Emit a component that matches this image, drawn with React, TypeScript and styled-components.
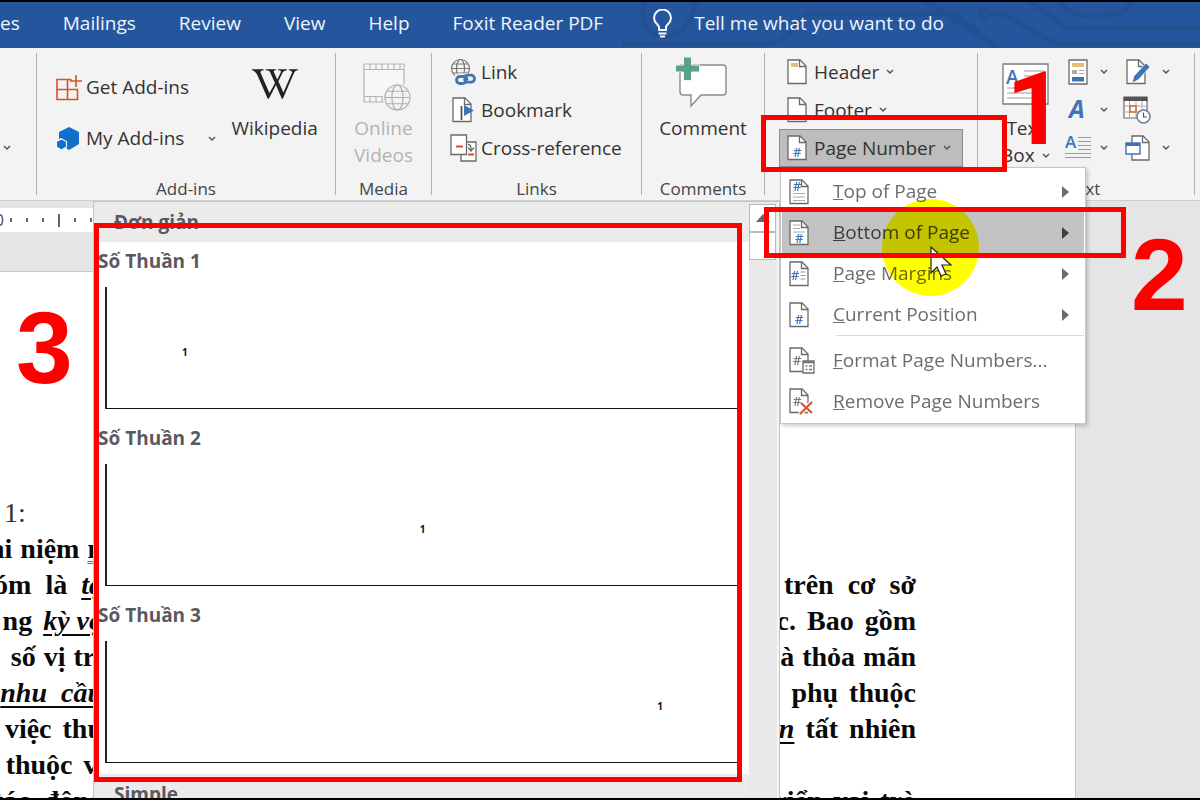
import React from 'react';
import styled, { createGlobalStyle } from 'styled-components';
import { FaWikipediaW } from 'react-icons/fa';

const UI_FONT = `'Open Sans', 'Noto Sans', sans-serif`;
const DOC_FONT = `'Liberation Serif', 'Times New Roman', serif`;
const RED = '#ff0000';

const GlobalStyle = createGlobalStyle`
  *, *::before, *::after { box-sizing: border-box; }
  body { margin: 0; background: #e6e6e6; font-family: ${UI_FONT}; }
  button { font: inherit; color: inherit; }
`;

/* ---------- frame ---------- */

const Screen = styled.div`
  position: relative;
  display: flex;
  flex-direction: column;
  height: 100vh;
  overflow: hidden;
  border-top: 2px solid #000;
  border-bottom: 2px solid #000;
`;

const TabBar = styled.nav`
  position: relative;
  display: flex;
  align-items: center;
  gap: 43px;
  flex: none;
  height: 46px;
  padding-bottom: 4px;
  background: #25569d;
  color: #eef4fb;
  font-size: 19px;
  line-height: 26px;
`;

const Circuit = styled.svg`
  position: absolute;
  top: 0;
  left: 620px;
  width: 580px;
  height: 46px;
`;

const Tab = styled.button`
  position: relative;
  flex: none;
  padding: 0;
  border: 0;
  background: none;
  white-space: nowrap;
`;

const TellMe = styled(Tab)`
  display: flex;
  align-items: center;
  gap: 21px;
  padding-left: 6px;
`;

/* ---------- ribbon ---------- */

const Ribbon = styled.div`
  display: flex;
  flex: none;
  padding: 5px 0;
  background: #f3f3f3;
  border-bottom: 1px solid #cfcfcf;
  color: #333;
  font-size: 19px;
  line-height: 27px;
`;

const Group = styled.section<{ $width: number; $inset?: number }>`
  display: flex;
  flex-direction: column;
  flex: none;
  width: ${(p) => p.$width}px;
  height: 142px;
  padding-left: ${(p) => p.$inset ?? 0}px;
  border-right: 1px solid #b4b4b4;
`;

const GroupBody = styled.div<{ $gap?: number; $center?: boolean }>`
  display: flex;
  gap: ${(p) => p.$gap ?? 0}px;
  justify-content: ${(p) => (p.$center ? 'center' : 'flex-start')};
  height: 114px;
`;

const GroupName = styled.h2<{ $inset?: number }>`
  margin: 14px 0 0;
  padding-right: ${(p) => p.$inset ?? 0}px;
  font-size: 17px;
  font-weight: 400;
  line-height: 16px;
  text-align: center;
  color: #444;
`;

const Stack = styled.div<{ $top?: number }>`
  display: flex;
  flex-direction: column;
  padding-top: ${(p) => p.$top ?? 0}px;
`;

const SmallButton = styled.button<{ $tall?: boolean; $active?: boolean }>`
  display: flex;
  align-items: center;
  gap: ${(p) => (p.$tall ? 4 : 5)}px;
  height: ${(p) => (p.$tall ? 51 : 38)}px;
  padding: 0 11px 0 ${(p) => (p.$tall ? 0 : 7)}px;
  border: 1px solid ${(p) => (p.$active ? '#8c8c8c' : 'transparent')};
  background: ${(p) => (p.$active ? '#bdbdbd' : 'none')};
  white-space: nowrap;
`;

const IconSlot = styled.span<{ $w: number; $center?: boolean }>`
  display: flex;
  flex: none;
  justify-content: ${(p) => (p.$center ? 'center' : 'flex-start')};
  width: ${(p) => p.$w}px;

  svg { flex: none; }
`;

const ArrowSlot = styled.span<{ $gap?: number }>`
  display: flex;
  padding-left: ${(p) => p.$gap ?? 2}px;
`;

const LargeButton = styled.button<{ $disabled?: boolean }>`
  display: flex;
  flex-direction: column;
  align-items: center;
  height: 116px;
  padding: 0;
  border: 0;
  background: none;
  color: ${(p) => (p.$disabled ? '#b3b3b3' : 'inherit')};
`;

const LargeIcon = styled.span`
  display: flex;
  align-items: center;
  justify-content: center;
  height: 62px;
`;

const LabelLine = styled.span`
  display: flex;
  align-items: center;
  gap: 7px;
`;

const IconButton = styled.button`
  display: flex;
  align-items: center;
  gap: 12px;
  height: 38px;
  padding: 0;
  border: 0;
  background: none;
`;

const EdgeButton = styled(IconButton)`
  align-self: flex-end;
  padding-left: 3px;
`;

const PageNumberControl = styled.div`
  position: relative;
  z-index: 3;
`;

/* ---------- page number menu ---------- */

const Menu = styled.ul`
  position: absolute;
  top: 100%;
  left: 1px;
  width: 306px;
  margin: 0;
  padding: 3px 1px 1px;
  list-style: none;
  background: #fff;
  border: 1px solid #c6c6c6;
  box-shadow: 2px 2px 4px rgba(0, 0, 0, 0.2);
`;

const MenuItem = styled.button<{ $active?: boolean }>`
  display: flex;
  align-items: center;
  gap: 18px;
  width: 100%;
  height: 41px;
  padding: 0 14px 0 7px;
  border: 0;
  background: ${(p) => (p.$active ? '#c3c3c3' : 'none')};
  color: ${(p) => (p.$active ? '#3c3c44' : '#6c6c76')};
  text-align: left;
  white-space: nowrap;
`;

const MenuText = styled.span`
  flex: 1;
`;

const Separator = styled.li`
  height: 1px;
  margin: 0 0 4px 54px;
  background: #dadada;
`;

const Highlight = styled.span`
  position: absolute;
  top: 31px;
  left: 101px;
  width: 97px;
  height: 97px;
  border-radius: 50%;
  background: #ffff00;
  mix-blend-mode: multiply;
  pointer-events: none;
`;

const Pointer = styled.svg`
  position: absolute;
  top: 78px;
  left: 149px;
`;

/* ---------- workspace ---------- */

const Workspace = styled.main`
  position: relative;
  display: flex;
  flex-direction: column;
  flex: 1;
  min-height: 0;
  padding-top: 7px;
  background: #e5e5e5;
`;

const Ruler = styled.div`
  display: flex;
  align-items: center;
  gap: 14px;
  width: 1076px;
  max-width: 100%;
  height: 24px;
  flex: none;
  overflow: hidden;
  background: #fff;
  color: #444;
  font-size: 16px;
`;

const RulerNumber = styled.span`
  width: 4px;
  margin-right: -8px;
  direction: rtl;
`;

const Tick = styled.i<{ $long?: boolean }>`
  flex: none;
  width: 2px;
  height: ${(p) => (p.$long ? 13 : 4)}px;
  background: #666;
`;

const Paper = styled.article`
  flex: none;
  width: 1076px;
  max-width: 100%;
  margin-top: 39px;
  padding: 223px 159px 0 0;
  background: #fff;
  border: 1px solid #c6c6c6;
  border-left: 0;
  font-family: ${DOC_FONT};
  font-size: 28px;
  font-weight: 700;
  line-height: 36px;
  color: #0a0a0a;
`;

const Line = styled.p`
  display: flex;
  justify-content: space-between;
  height: 36px;
  margin: 0;
  white-space: nowrap;
`;

const FirstLine = styled(Line)`
  padding-left: 4px;
  font-weight: 400;
  color: #333;
`;

const LineStart = styled.span<{ $gap: number }>`
  display: flex;
  justify-content: flex-end;
  gap: ${(p) => p.$gap}px;
  width: 103px;
`;

const LineEnd = styled.span<{ $gap: number }>`
  display: flex;
  gap: ${(p) => p.$gap}px;
`;

const Term = styled.em`
  text-decoration: underline;
  text-decoration-thickness: 2px;
  text-underline-offset: 4px;
`;

const Flagged = styled.span`
  text-decoration: underline double #3f6fc0 1px;
  text-underline-offset: 3px;
`;

/* ---------- gallery ---------- */

const Gallery = styled.div`
  position: absolute;
  z-index: 1;
  top: 0;
  bottom: 0;
  left: 93px;
  display: flex;
  width: 687px;
  overflow: hidden;
  background: #fff;
  border: 1px solid #c6c6c6;
  border-bottom: 0;
  color: #5a5a5e;
  font-size: 19px;
  font-weight: 700;
  line-height: 26px;
`;

const GalleryList = styled.div`
  flex: 1;
`;

const GalleryHeading = styled.h3`
  height: 40px;
  margin: 0;
  padding: 7px 0 0 20px;
  background: #ebebeb;
  font-size: inherit;
`;

const Preset = styled.button`
  display: flex;
  flex-direction: column;
  width: 100%;
  height: 177px;
  padding: 6px 11px 0 4px;
  border: 0;
  background: none;
  text-align: left;
`;

const PresetPage = styled.span<{ $align: string }>`
  align-self: stretch;
  height: 122px;
  margin: 13px 0 0 7px;
  padding: 57px 75px 0;
  border-left: 2px solid #222;
  border-bottom: 1px solid #111;
  color: #111;
  font-size: 10px;
  line-height: 16px;
  text-align: ${(p) => p.$align};
`;

const PresetGroup = styled.div`
  height: 532px;
`;

const GalleryScroll = styled.div`
  width: 30px;
  padding-top: 2px;
  background: #e9e9e9;
  border-right: 2px solid #f6f6f6;
`;

const ScrollButton = styled.button`
  display: flex;
  align-items: center;
  justify-content: center;
  width: 27px;
  height: 28px;
  padding: 0;
  border: 1px solid #b9b9b9;
  background: #fff;
`;

/* ---------- annotations ---------- */

const Frame = styled.div<{ $x: number; $y: number; $w: number; $h: number }>`
  position: absolute;
  z-index: 5;
  left: ${(p) => p.$x}px;
  top: ${(p) => p.$y}px;
  width: ${(p) => p.$w}px;
  height: ${(p) => p.$h}px;
  border: 5px solid ${RED};
  pointer-events: none;
`;

const StepNumber = styled.strong<{ $x: number; $y: number; $plain?: boolean }>`
  position: absolute;
  z-index: 5;
  left: ${(p) => p.$x}px;
  top: ${(p) => p.$y}px;
  font-family: ${(p) => (p.$plain ? 'Roboto' : "'Liberation Sans'")}, Arial, sans-serif;
  font-size: 102px;
  line-height: 100px;
  color: ${RED};
  pointer-events: none;
`;

/* ---------- icons ---------- */

const BLUE = '#3f74b5';
const INK = '#6a6a6a';

const Chevron = () => (
  <svg width="8" height="6" viewBox="0 0 8 6" fill="none" stroke="#555" strokeWidth="1.5" aria-hidden>
    <path d="M1 1l3 3 3-3" />
  </svg>
);

const Bulb = () => (
  <svg width="21" height="29" viewBox="0 0 21 29" fill="none" stroke="#f4f8fd" strokeWidth="2" aria-hidden>
    <path d="M7 21v-3c0-2-5-4-5-9a8.500 8.500 0 0 1 17 0c0 5-5 7-5 9v3z" />
    <path d="M6.500 24.500h8M8 27.500h5" />
  </svg>
);

const GetAddinsIcon = () => (
  <svg width="26" height="27" viewBox="0 0 26 27" fill="none" stroke="#d5532a" strokeWidth="1.600" aria-hidden>
    <path d="M1 5.500h10.500v20H1zM1 15.500h20.500v10H11.500M11.500 5.500h4M20 1v12M14 7h12" />
  </svg>
);

const MyAddinsIcon = () => (
  <svg width="24" height="24" viewBox="0 0 24 24" fill="#0f6fcb" aria-hidden>
    <path d="M13 0l10 5v12l-10 6-3-2v-7l-5-3-2 1V5z" />
    <path d="M5.500 12l5 2.500v5.500l-5 3-5-3v-5.500z" stroke="#f3f3f3" strokeWidth="1.200" />
  </svg>
);

const Globe = ({ x, y, r, color }: { x: number; y: number; r: number; color: string }) => (
  <g fill="#f3f3f3" stroke={color} strokeWidth="1.200">
    <circle cx={x} cy={y} r={r} />
    <ellipse cx={x} cy={y} rx={r * 0.45} ry={r} fill="none" />
    <path d={`M${x - r} ${y}h${2 * r}M${x - r * 0.85} ${y - r / 2}h${r * 1.7}M${x - r * 0.85} ${y + r / 2}h${r * 1.7}`} />
  </g>
);

const VideoIcon = () => (
  <svg width="55" height="53" viewBox="-7 -5 55 53" fill="none" stroke="#b5b5b5" strokeWidth="1.200" aria-hidden>
    <path d="M1 1h40v38H1zM1 6.500h40M1 33.500h40" fill="#f7f7f7" />
    <path d="M7 1v5.500M13 1v5.500M19 1v5.500M25 1v5.500M31 1v5.500M37 1v5.500M7 33.500v5.500M13 33.500v5.500M19 33.500v5.500" />
    <circle cx="34.500" cy="34.500" r="14.500" fill="#f3f3f3" stroke="none" />
    <Globe x={34.500} y={34.500} r={12.500} color="#b0b0b0" />
  </svg>
);

const LinkIcon = () => (
  <svg width="26" height="29" viewBox="0 0 26 29" fill="none" aria-hidden>
    <Globe x={10.500} y={10.500} r={9} color="#777" />
    <rect x="4" y="15.500" width="22" height="11.500" rx="5" fill="#f3f3f3" />
    <g stroke={BLUE} strokeWidth="2.800" strokeLinecap="round">
      <path d="M16 24c-1 1.300-2.500 1.500-4 1.500h-2a3.400 3.400 0 0 1 0-7h3.500c2 0 3 1.200 3.500 2.700" />
      <path d="M14.500 18.700c1-1.300 2.500-1.500 4-1.500h2.500a3.400 3.400 0 0 1 0 7h-3c-2 0-3-1.200-3.500-2.700" />
    </g>
  </svg>
);

const SHEET = 'M1 1h12l6 6v17.500H1z';
const FOLD = 'M12.500 1v6.500H19';

const Sheet = ({ children, h = 26, w = 20 }: { children?: React.ReactNode; h?: number; w?: number }) => (
  <svg width={w} height={h} viewBox={`0 0 ${w} ${h}`} fill="none" aria-hidden>
    <path d={SHEET} fill="#fff" stroke={INK} strokeWidth="1.300" />
    {children}
    <path d={FOLD} stroke={INK} strokeWidth="1.300" />
  </svg>
);

const Hash = ({ x, y, size = 13, color = BLUE }: { x: number; y: number; size?: number; color?: string }) => (
  <text x={x} y={y} fontFamily={UI_FONT} fontSize={size} fontWeight="600" fill={color}>
    #
  </text>
);

const BookmarkIcon = () => (
  <svg width="24" height="26" viewBox="-2 0 24 26" fill="none" aria-hidden>
    <path d={SHEET} fill="#fff" stroke={INK} strokeWidth="1.300" />
    <path d={FOLD} stroke={INK} strokeWidth="1.300" />
    <path d="M9.500 9v14" stroke="#555" strokeWidth="1.800" />
    <path d="M12 8v11l10-5.500z" fill={BLUE} />
  </svg>
);

const CrossRefIcon = () => (
  <svg width="28" height="28" viewBox="1 0 28 28" fill="none" stroke={INK} strokeWidth="1.300" aria-hidden>
    <path d="M12 8h15v19H12z" fill="#fff" />
    <path d="M2 1h15.500v19.500H2z" fill="#fff" />
    <path d="M7 12.500h7M19 20.500h6" stroke="#dd4a30" strokeWidth="2" />
    <path d="M19 10.500c3 0 3 2 3 6M19 13.500l3 3.500 3-3.500" />
  </svg>
);

const CommentIcon = () => (
  <svg width="56" height="54" viewBox="0 0 56 54" fill="none" aria-hidden>
    <path d="M6 8h42q3 0 3 3v24q0 3-3 3H26L16 49V38H8q-3 0-3-3V8z" fill="#fff" stroke="#8a8a8a" strokeWidth="1.400" />
    <path d="M8.500 0h8v8h8v7h-8v8.500h-8V15H.5V8h8z" fill="#5aa18c" stroke="#f3f3f3" strokeWidth="1" />
  </svg>
);

const TextBoxIcon = () => (
  <svg width="47" height="42" viewBox="0 0 47 42" fill="none" aria-hidden>
    <path d="M1 1h45v40H1z" fill="#fff" stroke="#7a7a7a" strokeWidth="1.300" />
    <text x="4" y="21" fontFamily={UI_FONT} fontSize="19" fontWeight="600" fill={BLUE}>A</text>
    <path d="M22 8h20M22 13h20M22 19h20M5 25h37M5 30h37M5 35h37" stroke="#9a9a9a" />
  </svg>
);

const QuickPartsIcon = () => (
  <svg width="20" height="26" viewBox="0 0 20 26" fill="none" aria-hidden>
    <path d="M1 1h18v24H1z" fill="#fff" stroke={INK} strokeWidth="1.300" />
    <path d="M4 4h12v4H4z" fill="#e8bd72" />
    <path d="M4 11h5v4H4z" fill="#aaa" />
    <path d="M11 11.500h5M11 14.500h5" stroke="#aaa" />
    <path d="M4 18h12v4.500H4z" fill={BLUE} />
  </svg>
);

const WordArtIcon = () => (
  <svg width="20" height="24" viewBox="0 0 20 24" aria-hidden>
    <text x="1" y="20" fontFamily={UI_FONT} fontSize="25" fontWeight="700" fontStyle="italic" fill={BLUE}>A</text>
  </svg>
);

const DropCapIcon = () => (
  <svg width="26" height="27" viewBox="0 0 26 27" aria-hidden>
    <text x="0" y="13" fontFamily={UI_FONT} fontSize="17" fontWeight="600" fill={BLUE}>A</text>
    <path d="M13 2.500h13M13 6.500h13M13 10.500h13M13 14.500h13M0 18.500h26M0 22.500h26" stroke="#9a9a9a" />
  </svg>
);

const SignatureIcon = () => (
  <svg width="25" height="26" viewBox="0 0 25 26" fill="none" aria-hidden>
    <path d={SHEET} fill="#fff" stroke={INK} strokeWidth="1.300" />
    <path d={FOLD} stroke={INK} strokeWidth="1.300" />
    <path d="M6 24l2-7L20 4l4 4-12 13z" fill={BLUE} stroke="#f3f3f3" strokeWidth="0.800" />
  </svg>
);

const DateIcon = () => (
  <svg width="30" height="28" viewBox="0 0 30 28" fill="none" aria-hidden>
    <path d="M1 2h23v20H1z" fill="#fff" stroke={INK} strokeWidth="1.200" />
    <path d="M0.500 0.500h24v4.500h-24z" fill="#555" />
    <path d="M1 10h23M1 16h23M6.500 5v17M13 5v17M19 5v17" stroke="#aaa" />
    <path d="M7 10h6v6H7z" stroke="#dd6b2c" strokeWidth="1.600" />
    <circle cx="20.500" cy="20.500" r="6.500" fill="#fff" stroke="#6b7f99" strokeWidth="1.500" />
    <path d="M20.500 16.500v4.500h3.500" stroke="#555" strokeWidth="1.200" />
  </svg>
);

const ObjectIcon = () => (
  <svg width="26" height="26" viewBox="0 0 26 26" fill="none" aria-hidden>
    <path d="M7 1h11l6 6v18H7z" fill="#fff" stroke={INK} strokeWidth="1.300" />
    <path d="M17.500 1v6.500H24" stroke={INK} strokeWidth="1.300" />
    <path d="M1 8h14v11H1z" fill="#fff" stroke={BLUE} strokeWidth="1.400" />
    <path d="M1 8h14v3H1z" fill={BLUE} />
  </svg>
);

const HeaderIcon = () => (
  <Sheet><path d="M4 4h7v4H4z" fill="#e8bd72" /></Sheet>
);
const FooterIcon = () => (
  <Sheet><path d="M4 18h12v4H4z" fill="#e8bd72" /></Sheet>
);
const NumberIcon = () => (
  <Sheet><Hash x={6} y={22} /></Sheet>
);
const TopIcon = () => (
  <Sheet>
    <Hash x={4} y={12} />
    <path d="M4 14.500h12M4 18h12M4 21.500h12" stroke="#aaa" />
  </Sheet>
);
const BottomIcon = () => (
  <Sheet>
    <path d="M4 5h7M4 8.500h7M4 12h12" stroke="#aaa" />
    <Hash x={6} y={23} />
  </Sheet>
);
const MarginsIcon = () => (
  <Sheet>
    <Hash x={2} y={19} />
    <path d="M11.500 11h5M11.500 14.500h5M11.500 18h5" stroke="#999" />
  </Sheet>
);
const FormatIcon = () => (
  <Sheet w={26} h={27}>
    <Hash x={4} y={18} color="#777" />
    <path d="M14 14h11v12H14z" fill="#fff" stroke={INK} strokeWidth="1.300" />
    <path d="M14 15.500h11" stroke={INK} strokeWidth="1.500" />
    <path d="M16.500 19h2M20 19h3M16.500 22.500h2M20 22.500h3" stroke="#777" strokeWidth="1.300" />
  </Sheet>
);
const RemoveIcon = () => (
  <Sheet w={26} h={27}>
    <Hash x={4} y={18} color="#777" />
    <path d="M12 15l11 10M23 14L11 26" stroke="#fff" strokeWidth="4.500" />
    <path d="M12 15l11 10M23 14L11 26" stroke="#d8533a" strokeWidth="2.200" />
  </Sheet>
);

const Submenu = () => (
  <svg width="8" height="12" viewBox="0 0 8 12" fill="currentColor" aria-hidden>
    <path d="M0 0l7 6-7 6z" />
  </svg>
);

/* ---------- data ---------- */

const TABS = ['es', 'Mailings', 'Review', 'View', 'Help', 'Foxit Reader PDF'];

const MENU = [
  { text: 'Top of Page', icon: <TopIcon />, sub: true },
  { text: 'Bottom of Page', icon: <BottomIcon />, sub: true, active: true },
  { text: 'Page Margins', icon: <MarginsIcon />, sub: true },
  { text: 'Current Position', icon: <NumberIcon />, sub: true },
  { text: 'Format Page Numbers...', icon: <FormatIcon />, divided: true },
  { text: 'Remove Page Numbers', icon: <RemoveIcon /> },
];

const PRESETS = [
  { name: 'Số Thuần 1', align: 'left' },
  { name: 'Số Thuần 2', align: 'center' },
  { name: 'Số Thuần 3', align: 'right' },
];

const LINES: { start: React.ReactNode[]; startGap: number; end: React.ReactNode[]; endGap: number }[] = [
  { start: ['ai', 'niệm', <Flagged>n</Flagged>], startGap: 8, end: [], endGap: 0 },
  { start: ['óm', 'là', <Term>tậ</Term>], startGap: 14, end: [<Term>ợ</Term>, 'trên', 'cơ', 'sở'], endGap: 14 },
  { start: ['ng', <Term>kỳ vọ</Term>], startGap: 11, end: ['c.', 'Bao', 'gồm'], endGap: 11 },
  { start: ['số', 'vị', 'trí'], startGap: 8, end: ['à', 'thỏa', 'mãn'], endGap: 8 },
  { start: [<Term>nhu&nbsp; cầu</Term>], startGap: 11, end: ['phụ', 'thuộc'], endGap: 11 },
  { start: ['việc', 'thu'], startGap: 11, end: [<Term>n</Term>, 'tất', 'nhiên'], endGap: 11 },
  { start: ['thuộc', 'v,'], startGap: 11, end: [], endGap: 0 },
  { start: ['tác', 'động'], startGap: 14, end: ['triển', 'vai', 'trò'], endGap: 11 },
];

const TICKS = [false, false, false, true, false, false];

/* ---------- page ---------- */

const AccessLabel = ({ text }: { text: string }) => (
  <MenuText>
    <u>{text[0]}</u>
    {text.slice(1)}
  </MenuText>
);

const Words = ({ items }: { items: React.ReactNode[] }) => (
  <>
    {items.map((w, i) => (
      <span key={i}>{w}</span>
    ))}
  </>
);

export default function App() {
  return (
    <Screen>
      <GlobalStyle />
      <TabBar>
        <Circuit viewBox="0 0 580 46" fill="none" stroke="#234d8a" strokeWidth="5" opacity="0.6" aria-hidden>
          <path d="M24 0q-6 30 18 34t34-34M2 42h140q20 0 32-16l12-14h150l40 34M306 0l38 24 36 22M368 12h16l52 30h146M410 0l38 26h132M440 0q10 16 40 14t30-14" />
          <circle cx="364" cy="12" r="4" />
        </Circuit>
        {TABS.map((t) => (
          <Tab key={t}>{t}</Tab>
        ))}
        <TellMe>
          <Bulb />
          Tell me what you want to do
        </TellMe>
      </TabBar>

      <Ribbon>
        <Group $width={37}>
          <GroupBody>
            <EdgeButton aria-label="More"><Chevron /></EdgeButton>
          </GroupBody>
        </Group>

        <Group $width={299} $inset={18}>
          <GroupBody $gap={3}>
            <Stack $top={9}>
              <SmallButton $tall>
                <IconSlot $w={26}><GetAddinsIcon /></IconSlot>Get Add-ins
              </SmallButton>
              <SmallButton $tall>
                <IconSlot $w={26}><MyAddinsIcon /></IconSlot>My Add-ins
                <ArrowSlot $gap={20}><Chevron /></ArrowSlot>
              </SmallButton>
            </Stack>
            <LargeButton>
              <LargeIcon><FaWikipediaW size={46} color="#222" /></LargeIcon>
              Wikipedia
            </LargeButton>
          </GroupBody>
          <GroupName $inset={18}>Add-ins</GroupName>
        </Group>

        <Group $width={96}>
          <GroupBody $center>
            <LargeButton $disabled>
              <LargeIcon><VideoIcon /></LargeIcon>
              <span>Online</span>
              <span>Videos</span>
            </LargeButton>
          </GroupBody>
          <GroupName>Media</GroupName>
        </Group>

        <Group $width={210} $inset={10}>
          <GroupBody>
            <Stack>
              <SmallButton><IconSlot $w={26}><LinkIcon /></IconSlot>Link</SmallButton>
              <SmallButton><IconSlot $w={26}><BookmarkIcon /></IconSlot>Bookmark</SmallButton>
              <SmallButton><IconSlot $w={26}><CrossRefIcon /></IconSlot>Cross-reference</SmallButton>
            </Stack>
          </GroupBody>
          <GroupName $inset={10}>Links</GroupName>
        </Group>

        <Group $width={123}>
          <GroupBody $center>
            <LargeButton>
              <LargeIcon><CommentIcon /></LargeIcon>
              Comment
            </LargeButton>
          </GroupBody>
          <GroupName>Comments</GroupName>
        </Group>

        <Group $width={213} $inset={14}>
          <Stack>
            <SmallButton>
              <IconSlot $w={22}><HeaderIcon /></IconSlot>Header
              <ArrowSlot><Chevron /></ArrowSlot>
            </SmallButton>
            <SmallButton>
              <IconSlot $w={22}><FooterIcon /></IconSlot>Footer
              <ArrowSlot><Chevron /></ArrowSlot>
            </SmallButton>
            <PageNumberControl>
              <SmallButton $active aria-haspopup="menu" aria-expanded>
                <IconSlot $w={22}><NumberIcon /></IconSlot>Page Number
                <ArrowSlot><Chevron /></ArrowSlot>
              </SmallButton>
              <Menu>
                {MENU.map((m) => (
                  <React.Fragment key={m.text}>
                    {m.divided && <Separator role="separator" />}
                    <li>
                      <MenuItem $active={m.active}>
                        <IconSlot $w={26}>{m.icon}</IconSlot>
                        <AccessLabel text={m.text} />
                        {m.sub && <Submenu />}
                      </MenuItem>
                    </li>
                  </React.Fragment>
                ))}
                <Highlight />
                <Pointer width="22" height="32" viewBox="0 0 22 32" aria-hidden>
                  <path d="M1 1v26l6-6 4 9 5-2-4-9h9z" fill="#fff" stroke="#222" strokeWidth="1.200" />
                </Pointer>
              </Menu>
            </PageNumberControl>
          </Stack>
        </Group>

        <Group $width={217} $inset={23}>
          <GroupBody $gap={18}>
            <LargeButton>
              <LargeIcon><TextBoxIcon /></LargeIcon>
              <span>Text</span>
              <LabelLine>Box <Chevron /></LabelLine>
            </LargeButton>
            <Stack>
              <IconButton aria-label="Quick Parts"><IconSlot $w={20}><QuickPartsIcon /></IconSlot><Chevron /></IconButton>
              <IconButton aria-label="WordArt"><IconSlot $w={20}><WordArtIcon /></IconSlot><Chevron /></IconButton>
              <IconButton aria-label="Drop Cap"><IconSlot $w={20} $center><DropCapIcon /></IconSlot><Chevron /></IconButton>
            </Stack>
            <Stack>
              <IconButton aria-label="Signature Line"><IconSlot $w={24}><SignatureIcon /></IconSlot><Chevron /></IconButton>
              <IconButton aria-label="Date and Time"><IconSlot $w={24} $center><DateIcon /></IconSlot></IconButton>
              <IconButton aria-label="Object"><IconSlot $w={24} $center><ObjectIcon /></IconSlot><Chevron /></IconButton>
            </Stack>
          </GroupBody>
          <GroupName $inset={28}>Text</GroupName>
        </Group>
      </Ribbon>

      <Workspace>
        <Ruler>
          <RulerNumber>0</RulerNumber>
          {TICKS.map((long, i) => (
            <Tick key={i} $long={long} />
          ))}
        </Ruler>
        <Paper>
          <FirstLine>1:</FirstLine>
          {LINES.map((l, i) => (
            <Line key={i}>
              <LineStart $gap={l.startGap}><Words items={l.start} /></LineStart>
              <LineEnd $gap={l.endGap}><Words items={l.end} /></LineEnd>
            </Line>
          ))}
        </Paper>

        <Gallery>
          <GalleryList>
            <GalleryHeading>Đơn giản</GalleryHeading>
            <PresetGroup>
              {PRESETS.map((p) => (
                <Preset key={p.name}>
                  {p.name}
                  <PresetPage $align={p.align}>1</PresetPage>
                </Preset>
              ))}
            </PresetGroup>
            <GalleryHeading>Simple</GalleryHeading>
          </GalleryList>
          <GalleryScroll>
            <ScrollButton aria-label="Scroll up">
              <svg width="14" height="8" viewBox="0 0 14 8" fill="#666" aria-hidden><path d="M7 0l7 8H0z" /></svg>
            </ScrollButton>
            <ScrollButton aria-label="Scroll position" />
          </GalleryScroll>
        </Gallery>
      </Workspace>

      <Frame $x={761} $y={113} $w={246} $h={57} />
      <Frame $x={764} $y={205} $w={362} $h={51} />
      <Frame $x={94} $y={221} $w={648} $h={559} />
      <StepNumber $x={1006} $y={57} $plain>1</StepNumber>
      <StepNumber $x={1131} $y={223}>2</StepNumber>
      <StepNumber $x={16} $y={296}>3</StepNumber>
    </Screen>
  );
}
